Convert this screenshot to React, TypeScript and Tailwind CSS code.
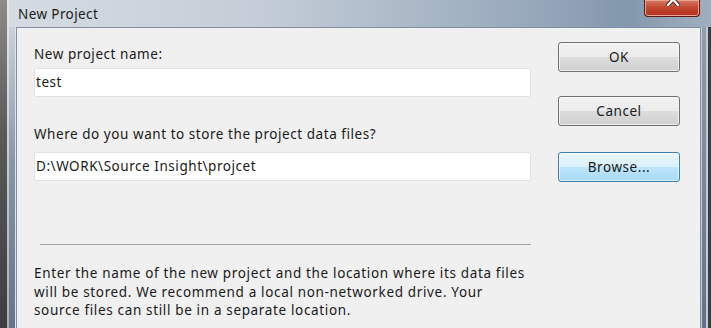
import React from "react";

const font = { fontFamily: '"Noto Sans", "Open Sans", Arial, sans-serif' };

const Field = ({ value }: { value: string }) => (
  <div className="h-[29px] w-full bg-white border border-[#e2e2e2] rounded-[2px] flex items-center pl-[1px] text-[13.5px] tracking-[0.55px] text-[#1a1a1a]">
    {value}
  </div>
);

const Btn = ({ label, focus }: { label: string; focus?: boolean }) => (
  <button
    className={
      focus
        ? "w-[122px] h-[30px] rounded-[3px] border border-[#3c7fb1] bg-[linear-gradient(#eaf6fd_0%,#d9f0fc_50%,#bee6fd_51%,#a7d9f5_100%)] shadow-[inset_0_0_0_1px_#ffffffa0] text-[13.5px] tracking-[0.55px] text-[#1a1a1a]"
        : "w-[122px] h-[30px] rounded-[3px] border border-[#707070] bg-[linear-gradient(#f2f2f2_0%,#ebebeb_50%,#dddddd_51%,#cfcfcf_100%)] shadow-[inset_0_0_0_1px_#fcfcfcb0] text-[13.5px] tracking-[0.55px] text-[#1a1a1a]"
    }
  >
    {label}
  </button>
);

export default function App() {
  return (
    <div className="w-[711px] h-[328px] overflow-hidden flex" style={font}>
      {/* outer strips on the left */}
      <div className="w-[7px] bg-[linear-gradient(#8a8a8a,#5a5a5a_40%,#3e3e3e)]" />
      <div className="w-[2px] bg-[linear-gradient(#e6e6e6,#a9adb2)]" />

      <div className="flex-1 flex flex-col bg-[linear-gradient(90deg,#d4dbe3_0%,#c5ced8_35%,#9aabbd_72%,#8397ad_88%,#a0afbf_100%)]">
        {/* title bar */}
        <div className="h-[27px] flex items-start relative">
          <span className="pl-[9px] pt-[4px] text-[13.5px] tracking-[0.4px] text-[#1c1c1c]">New Project</span>
          <div className="absolute left-[635px] top-0 w-[56px] h-[17px] rounded-b-[4px] border border-t-0 border-[#5d1a10] bg-[linear-gradient(#d77a66,#c2452f_50%,#b2321d)] shadow-[inset_0_0_0_1px_#e9a495] overflow-hidden">
            <svg className="absolute left-[21px] top-[-7px]" width="14" height="13" viewBox="0 0 14 13">
              <path d="M2 1 L12 12 M12 1 L2 12" stroke="#4a1a12" strokeWidth="4.2" strokeLinecap="square" />
              <path d="M2 1 L12 12 M12 1 L2 12" stroke="#ffffff" strokeWidth="2.4" strokeLinecap="square" />
            </svg>
          </div>
        </div>

        {/* body row with side frames */}
        <div className="flex-1 flex">
          <div className="w-[6px] bg-[linear-gradient(#c9d1da,#8797aa_45%,#62758b)]" />
          <div className="w-[1px] bg-[#dde3e8]" />
          <div className="flex-1 border border-b-0 border-[#7f90a3] bg-[#f0f0f0] flex pl-[17px] pr-[16px]">
            {/* left column */}
            <div className="w-[497px] flex flex-col text-[13.5px] tracking-[0.55px] text-[#1a1a1a]">
              <div className="mt-[17px] leading-[18px]">New project name:</div>
              <div className="mt-[5px]">
                <Field value="test" />
              </div>
              <div className="mt-[28px] leading-[18px]">Where do you want to store the project data files?</div>
              <div className="mt-[9px]">
                <Field value="D:\WORK\Source Insight\projcet" />
              </div>
              <div className="mt-[63px] ml-[6px] h-[1px] bg-[#a0a0a0]" />
              <p className="mt-[19px] leading-[18.5px] tracking-[0.65px]">
                Enter the name of the new project and the location where its data files
                <br />
                will be stored. We recommend a local non-networked drive. Your
                <br />
                source files can still be in a separate location.
              </p>
            </div>
            {/* buttons */}
            <div className="ml-[27px] flex flex-col pt-[14px]">
              <Btn label="OK" />
              <div className="mt-[24px]">
                <Btn label="Cancel" />
              </div>
              <div className="mt-[26px]">
                <Btn label="Browse..." focus />
              </div>
            </div>
          </div>
          <div className="w-[1px] bg-[#c9ced4]" />
          <div className="w-[4px] bg-[linear-gradient(#8f9fb1,#5f7289)]" />
          <div className="w-[2px] bg-[#c3cad2]" />
          <div className="w-[3px] bg-[#3d3d3d]" />
        </div>
      </div>
    </div>
  );
}
